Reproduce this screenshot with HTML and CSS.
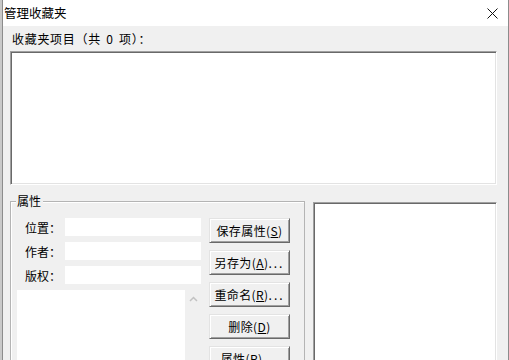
FILE: index.html
```html
<!DOCTYPE html>
<html lang="zh-CN">
<head>
  <meta charset="UTF-8">
  <title>管理收藏夹</title>
  <link rel="stylesheet" href="styles.css">
</head>
<body>
  <div class="window">
    <div class="titlebar">
      <span class="title">管理收藏夹</span>
      <svg class="close" width="11" height="11" viewBox="0 0 11 11">
        <path d="M0.5 0.5 L10.5 10.5 M10.5 0.5 L0.5 10.5" stroke="#111" stroke-width="1" fill="none"/>
      </svg>
    </div>

    <div class="content">
      <div class="caption">收藏夹项目（共 0 项）：</div>
      <div class="listbox sunken"></div>

      <div class="lower">
        <div class="group">
          <span class="legend">属性</span>
          <div class="fields">
            <div class="field"><span class="label">位置：</span><div class="edit"></div></div>
            <div class="field"><span class="label">作者：</span><div class="edit"></div></div>
            <div class="field"><span class="label">版权：</span><div class="edit"></div></div>
            <div class="notes">
              <div class="notes-text"></div>
              <div class="scroll">
                <svg width="9" height="6" viewBox="0 0 9 6">
                  <path d="M1 5 L4.5 1.5 L8 5" stroke="#c2c2c2" stroke-width="1.5" fill="none"/>
                </svg>
              </div>
            </div>
          </div>
          <div class="buttons">
            <button class="btn">保存属性(<u>S</u>)</button>
            <button class="btn">另存为(<u>A</u>)<span class="dots">...</span></button>
            <button class="btn">重命名(<u>R</u>)<span class="dots">...</span></button>
            <button class="btn">删除(<u>D</u>)</button>
            <button class="btn">属性(<u>P</u>)<span class="dots">...</span></button>
          </div>
        </div>
        <div class="preview sunken"></div>
      </div>
    </div>
  </div>
</body>
</html>
```

FILE: styles.css
```css
body {
  margin: 0;
  background: #c9c9c9;
  font-family: "Noto Sans CJK SC", "DejaVu Sans", sans-serif;
  font-size: 12px;
  color: #000;
  overflow: hidden;
}

.window {
  margin-left: 2px;
  width: 505px;
  height: 360px;
  background: #f0f0f0;
  border-left: 1px solid #8c8c8c;
  border-right: 1px solid #8c8c8c;
  overflow: hidden;
}

/* title bar */
.titlebar {
  height: 26px;
  background: #fff;
  display: flex;
  align-items: center;
  justify-content: space-between;
  padding: 0 10px 0 1px;
}

.title {
  font-size: 12.5px;
  line-height: 26px;
}

.close {
  display: block;
  margin-top: 1px;
}

/* main area */
.content {
  padding: 0 11px 0 7px;
}

.caption {
  padding-top: 6px;
  height: 14px;
  line-height: 14px;
  margin: 0 0 5px 2px;
  letter-spacing: 0.7px;
  word-spacing: 2px;
}

.sunken {
  background: #fff;
  border: 1px solid;
  border-color: #a0a0a0 #fff #fff #a0a0a0;
  box-shadow: inset 1px 1px 0 #696969, inset -1px -1px 0 #e3e3e3;
  box-sizing: border-box;
}

.listbox {
  height: 134px;
}

.lower {
  display: flex;
  gap: 8px;
  margin-top: 16px;
}

/* properties group */
.group {
  position: relative;
  display: flex;
  gap: 8px;
  width: 295px;
  height: 200px;
  box-sizing: border-box;
  padding: 16px 14px 0 6px;
  border: 1px solid #b4b4b4;
  box-shadow: inset 1px 1px 0 #fff;
}

.legend {
  position: absolute;
  top: -9px;
  left: 5px;
  padding: 0 2px 0 1px;
  background: #f0f0f0;
  line-height: 16px;
}

.fields {
  width: 184px;
  display: flex;
  flex-direction: column;
  gap: 6px;
}

.field {
  display: flex;
  height: 18px;
  align-items: center;
}

.label {
  width: 40px;
  padding-left: 8px;
}

.edit {
  width: 136px;
  height: 18px;
  background: #fff;
}

.notes {
  display: flex;
  height: 100px;
}

.notes-text {
  width: 168px;
  background: #fff;
}

.scroll {
  width: 16px;
  background: #f0f0f0;
  display: flex;
  justify-content: center;
  padding-top: 6px;
  box-sizing: border-box;
  align-items: flex-start;
}

.scroll svg {
  display: block;
}

.buttons {
  width: 81px;
  display: flex;
  flex-direction: column;
  gap: 7px;
}

.btn {
  height: 25px;
  padding: 0;
  font-family: inherit;
  font-size: 12px;
  letter-spacing: 0.4px;
  color: #000;
  background: #f0f0f0;
  border: 1px solid;
  border-color: #e3e3e3 #696969 #696969 #e3e3e3;
  box-shadow: inset 1px 1px 0 #fff, inset -1px -1px 0 #a0a0a0;
  white-space: nowrap;
}

.dots {
  letter-spacing: 2px;
}

.preview {
  width: 184px;
  height: 200px;
  margin-top: 1px;
}
```
